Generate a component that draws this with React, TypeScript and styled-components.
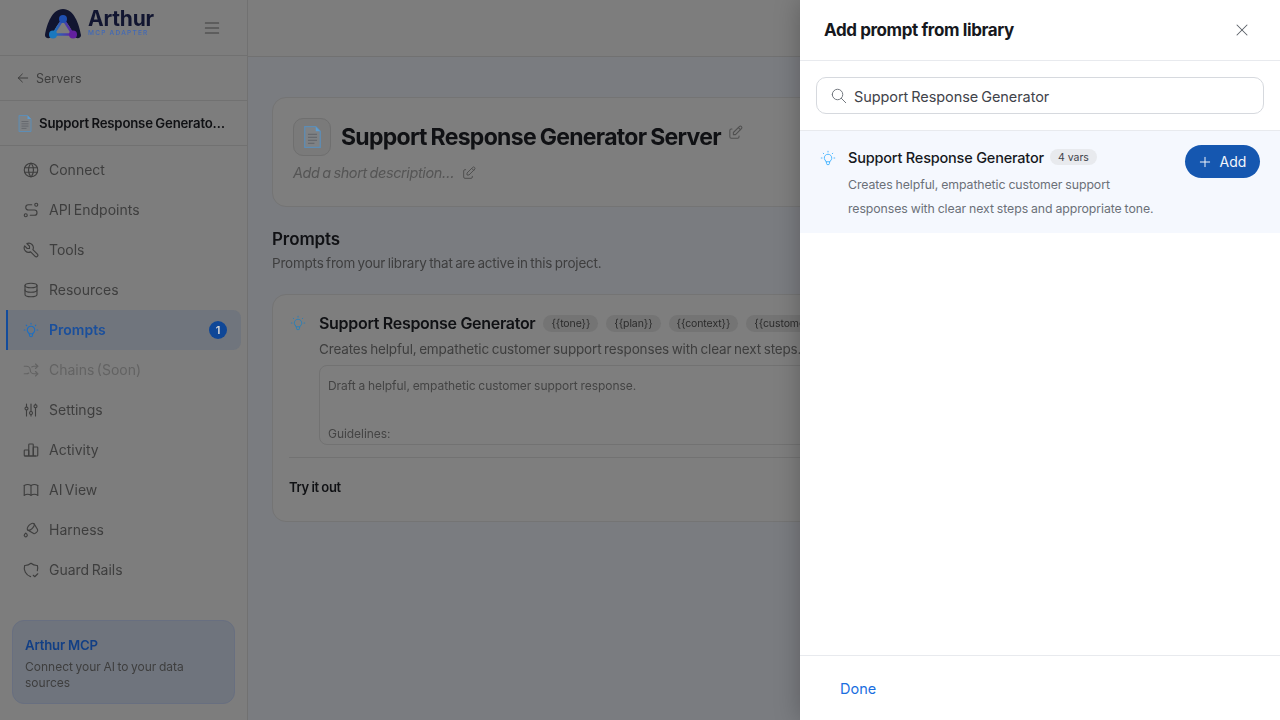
import React from "react";
import styled, { createGlobalStyle } from "styled-components";
import { IconType } from "react-icons";
import {
  TbArrowLeft, TbMenu2, TbWorld, TbRoute, TbTool, TbDatabase, TbBulb, TbArrowsShuffle, TbAdjustments,
  TbChartBar, TbBook, TbBucketDroplet, TbShieldCheck, TbEdit, TbX, TbSearch, TbPlus,
} from "react-icons/tb";

const FONT = `Inter, "Noto Sans", "Liberation Sans", sans-serif`;

const Global = createGlobalStyle`
  html, body { margin: 0; padding: 0; width: 1280px; height: 720px; overflow: hidden; background: #fff; }
  * { box-sizing: border-box; }
  body { font-family: ${FONT}; color: #16181d; }
`;

const Page = styled.div`
  position: relative;
  width: 1280px;
  height: 720px;
  overflow: hidden;
`;

const Shell = styled.div`
  display: flex;
  width: 1280px;
  height: 720px;
  filter: blur(0.45px);
`;

const Sidebar = styled.aside`
  width: 248px;
  flex: none;
  display: flex;
  flex-direction: column;
  background: #7d7d7d;
  border-right: 1px solid #717171;
`;

const Brand = styled.div`
  height: 56px;
  flex: none;
  display: flex;
  align-items: center;
  border-bottom: 1px solid #717171;
  padding: 0 25px 0 44px;
  justify-content: space-between;
`;

const LogoGroup = styled.div`
  display: flex;
  align-items: center;
  gap: 6px;
  margin-bottom: 8px;
`;

const LogoText = styled.div`
  display: flex;
  flex-direction: column;
  margin-top: -3px;
`;

const LogoName = styled.span`
  font-size: 21px;
  font-weight: 700;
  color: #111530;
  letter-spacing: -0.2px;
  line-height: 22px;
`;

const LogoSub = styled.span`
  font-size: 6.5px;
  font-weight: 500;
  color: #3f68b8;
  letter-spacing: 1.25px;
  line-height: 7px;
`;

const BackRow = styled.div`
  height: 45px;
  flex: none;
  display: flex;
  align-items: center;
  gap: 5px;
  padding-left: 15px;
  font-size: 12.5px;
  color: #3e3e3e;
  border-bottom: 1px solid #717171;
`;

const ServerRow = styled.div`
  height: 45px;
  flex: none;
  display: flex;
  align-items: center;
  gap: 7px;
  padding-left: 18px;
  font-size: 13.2px;
  font-weight: 600;
  letter-spacing: -0.2px;
  word-spacing: -0.5px;
  color: #101114;
  border-bottom: 1px solid #717171;
`;

const Nav = styled.nav`
  display: flex;
  flex-direction: column;
  padding: 4px 6px 0;
`;

const NavItem = styled.div<{ $active?: boolean; $disabled?: boolean }>`
  height: 40px;
  display: flex;
  align-items: center;
  gap: 9px;
  padding: 0 14px 0 14px;
  width: 235px;
  font-size: 14px;
  word-spacing: -1.5px;
  font-weight: ${(p) => (p.$active ? 600 : 400)};
  color: ${(p) => (p.$active ? "#1a4f9c" : p.$disabled ? "#636363" : "#3e3e3e")};
  background: ${(p) => (p.$active ? "#70757d" : "transparent")};
  border-left: 2px solid ${(p) => (p.$active ? "#124c9c" : "transparent")};
  border-radius: ${(p) => (p.$active ? "0 8px 8px 0" : "0")};
`;

const NavLabel = styled.span`
  flex: 1;
  margin-bottom: 2px;
`;

const Count = styled.span`
  width: 18px;
  height: 18px;
  border-radius: 50%;
  background: #0f4797;
  color: #d8d8d8;
  font-size: 11px;
  font-weight: 600;
  display: flex;
  align-items: center;
  justify-content: center;
`;

const Promo = styled.div`
  margin: auto 12px 16px;
  height: 84px;
  padding: 15px 12px;
  border-radius: 12px;
  background: #6f747d;
  border: 1px solid #686f80;
`;

const PromoTitle = styled.div`
  font-size: 13.2px;
  font-weight: 600;
  line-height: 18px;
  color: #123f85;
  letter-spacing: -0.2px;
`;

const PromoText = styled.div`
  margin-top: 5px;
  font-size: 12px;
  line-height: 16px;
  word-spacing: -0.8px;
  color: #3e3e3e;
`;

const Main = styled.main`
  flex: 1;
  min-width: 0;
  background: #7a7c80;
  display: flex;
  flex-direction: column;
`;

const TopBar = styled.div`
  height: 57px;
  flex: none;
  background: #7d7d7d;
  border-bottom: 1px solid #717171;
`;

const Content = styled.div`
  padding: 40px 24px;
  display: flex;
  flex-direction: column;
`;

const HeadCard = styled.section`
  height: 110px;
  background: #7e7e7e;
  border: 1px solid #747474;
  border-radius: 14px;
  padding: 20px;
`;

const TitleRow = styled.div`
  display: flex;
  align-items: center;
  gap: 10px;
`;

const EmojiBox = styled.div`
  width: 38px;
  height: 38px;
  border: 1px solid #6f6f6f;
  border-radius: 10px;
  background: #7a7a7a;
  display: flex;
  align-items: center;
  justify-content: center;
`;

const BigTitle = styled.h1`
  margin: 0 -4px 0 0;
  font-size: 23px;
  font-weight: 700;
  letter-spacing: -0.7px;
  word-spacing: -1px;
  color: #101114;
`;

const RaisedIcon = styled.span`
  display: inline-flex;
  margin-bottom: 9px;
  color: #505050;
`;

const DescRow = styled.div`
  margin-top: 8px;
  display: flex;
  align-items: center;
  gap: 7px;
  font-size: 14.5px;
  font-style: italic;
  letter-spacing: -0.4px;
  word-spacing: -1px;
  color: #555;
`;

const SectionTitle = styled.h2`
  margin: 21px 0 0;
  font-size: 17px;
  font-weight: 600;
  letter-spacing: -0.1px;
  line-height: 22px;
  color: #101114;
`;

const SectionSub = styled.p`
  margin: 3px 0 0;
  font-size: 13.5px;
  line-height: 20px;
  letter-spacing: -0.22px;
  word-spacing: -1px;
  color: #3e3e3e;
`;

const PromptCard = styled.section`
  margin-top: 21px;
  height: 228px;
  background: #7e7e7e;
  border: 1px solid #747474;
  border-radius: 14px;
  padding: 15px 16px;
  overflow: hidden;
`;

const PromptBody = styled.div`
  display: flex;
  gap: 12px;
`;

const BulbSlot = styled.span`
  flex: none;
  display: inline-flex;
  height: 18px;
  margin-top: 4px;
  color: #2a7fb8;
`;

const PromptMain = styled.div`
  flex: 1;
  min-width: 0;
`;

const PromptHead = styled.div`
  display: flex;
  align-items: center;
  gap: 8px;
  height: 26px;
  white-space: nowrap;
`;

const PromptName = styled.span`
  font-size: 16px;
  font-weight: 600;
  letter-spacing: -0.3px;
  color: #101114;
`;

const VarChip = styled.span`
  height: 17px;
  padding: 0 8px;
  display: inline-flex;
  align-items: center;
  border-radius: 9px;
  background: #747474;
  font-size: 10.5px;
  letter-spacing: -0.1px;
  color: #2b2b2b;
`;

const PromptDesc = styled.div`
  margin-top: 3px;
  font-size: 13.5px;
  line-height: 20px;
  letter-spacing: -0.15px;
  word-spacing: -1px;
  color: #3e3e3e;
  white-space: nowrap;
`;

const Preview = styled.pre`
  margin: 6px 0 0;
  height: 80px;
  padding: 8px;
  overflow: hidden;
  font-family: ${FONT};
  font-size: 12px;
  line-height: 24px;
  letter-spacing: -0.05px;
  word-spacing: -0.5px;
  color: #444;
  border: 1px solid #727272;
  border-radius: 8px;
`;

const Divider = styled.div`
  margin-top: 12px;
  border-top: 1px solid #727272;
`;

const TryIt = styled.div`
  margin-top: 21px;
  font-size: 13px;
  font-weight: 600;
  letter-spacing: -0.3px;
  word-spacing: -0.5px;
  color: #101114;
`;

const Drawer = styled.aside`
  position: absolute;
  top: 0;
  right: 0;
  bottom: 0;
  width: 480px;
  background: #fff;
  display: flex;
  flex-direction: column;
  box-shadow: 0 0 24px rgba(0, 0, 0, 0.25);
`;

const DrawerHead = styled.header`
  height: 61px;
  flex: none;
  display: flex;
  align-items: center;
  justify-content: space-between;
  padding: 0 28px 0 24px;
  border-bottom: 1px solid #e8eaee;
  color: #5b6068;
`;

const DrawerTitle = styled.h3`
  margin: 0;
  font-size: 17px;
  font-weight: 700;
  color: #16181d;
  letter-spacing: -0.4px;
`;

const SearchZone = styled.div`
  height: 70px;
  flex: none;
  padding: 16px;
  border-bottom: 1px solid #e8eaee;
`;

const SearchBox = styled.div`
  height: 37px;
  display: flex;
  align-items: center;
  gap: 6px;
  padding: 1px 13px 0;
  border: 1px solid #d6d9de;
  border-radius: 10px;
  font-size: 14.5px;
  letter-spacing: -0.07px;
  word-spacing: -1px;
  color: #3f434a;
`;

const Result = styled.div`
  height: 102px;
  flex: none;
  background: #f5f8fe;
  padding: 14px 20px 0 19px;
  display: flex;
  align-items: flex-start;
  gap: 11px;
`;

const ResultBulb = styled.span`
  flex: none;
  display: inline-flex;
  height: 18px;
  margin-top: 4px;
  color: #45b4ff;
`;

const ResultMain = styled.div`
  flex: 1;
  min-width: 0;
`;

const ResultHead = styled.div`
  display: flex;
  align-items: center;
  gap: 6px;
  height: 24px;
`;

const ResultName = styled.span`
  font-size: 14.5px;
  font-weight: 500;
  letter-spacing: -0.2px;
  color: #16181d;
`;

const VarsBadge = styled.span`
  height: 16px;
  padding: 0 8px;
  display: inline-flex;
  align-items: center;
  border-radius: 8px;
  background: #e8eaee;
  font-size: 10.5px;
  color: #3f434a;
`;

const ResultDesc = styled.p`
  margin: 4px 0 0;
  width: 320px;
  font-size: 12.3px;
  line-height: 24px;
  letter-spacing: -0.08px;
  word-spacing: -0.4px;
  color: #6b7078;
`;

const AddButton = styled.button`
  height: 33px;
  width: 75px;
  flex: none;
  border: 0;
  padding: 0 2px 0 0;
  border-radius: 17px;
  background: #1557b0;
  color: #f2f5fb;
  display: flex;
  align-items: center;
  justify-content: center;
  gap: 7px;
  font-family: ${FONT};
  font-size: 14px;
  font-weight: 400;
`;

const DrawerFoot = styled.footer`
  margin-top: auto;
  height: 65px;
  flex: none;
  display: flex;
  align-items: center;
  padding-left: 40px;
  border-top: 1px solid #e8eaee;
  font-size: 14.5px;
  font-weight: 400;
  color: #1a6ee0;
`;

const navItems: { label: string; icon: IconType; active?: boolean; disabled?: boolean; count?: number }[] = [
  { label: "Connect", icon: TbWorld },
  { label: "API Endpoints", icon: TbRoute },
  { label: "Tools", icon: TbTool },
  { label: "Resources", icon: TbDatabase },
  { label: "Prompts", icon: TbBulb, active: true, count: 1 },
  { label: "Chains (Soon)", icon: TbArrowsShuffle, disabled: true },
  { label: "Settings", icon: TbAdjustments },
  { label: "Activity", icon: TbChartBar },
  { label: "AI View", icon: TbBook },
  { label: "Harness", icon: TbBucketDroplet },
  { label: "Guard Rails", icon: TbShieldCheck },
];

const ArthurMark = () => (
  <svg width="38" height="32" viewBox="0 0 38 32" aria-hidden="true">
    <defs>
      <linearGradient id="tri" x1="0" y1="0" x2="1" y2="0">
        <stop offset="0" stopColor="#1a78bd" />
        <stop offset="1" stopColor="#62209f" />
      </linearGradient>
    </defs>
    <path
      d="M1 27C3 16 8 1 19 1s16 15 18 26c.4 3-3.500 4-5.500 2.500C28 26 26 15 19 12 12 15 10 26 6.500 29.500 4.500 31 .6 30 1 27z"
      fill="#111530"
    />
    <path d="M19 11 9 26.500h20z" fill="none" stroke="url(#tri)" strokeWidth="2.500" strokeLinejoin="round" />
    <circle cx="19" cy="11" r="4" fill="#1f4fb0" />
    <circle cx="9" cy="26.500" r="4" fill="#1a78bd" />
    <circle cx="29" cy="26.500" r="4" fill="#62209f" />
  </svg>
);

const DocIcon = ({ width, height }: { width: number; height: number }) => (
  <svg width={width} height={height} viewBox="0 0 14 17" aria-hidden="true">
    <path d="M1 .5h8.500L13 4v12.500H1z" fill="#7f8285" stroke="#5d8db5" strokeWidth="1" />
    <path d="M9.500 .5V4H13z" fill="#5d9cd0" />
    <path d="M3.500 6.500h7M3.500 8.800h7M3.500 11.100h7M3.500 13.400h5" stroke="#66696e" strokeWidth="1" />
  </svg>
);

export default function App() {
  return (
    <>
      <Global />
      <Page>
        <Shell>
          <Sidebar>
            <Brand>
              <LogoGroup>
                <ArthurMark />
                <LogoText>
                  <LogoName>Arthur</LogoName>
                  <LogoSub>MCP ADAPTER</LogoSub>
                </LogoText>
              </LogoGroup>
              <TbMenu2 size={20} color="#3e3e3e" strokeWidth={1.25} />
            </Brand>
            <BackRow>
              <TbArrowLeft size={16} strokeWidth={1.5} />
              Servers
            </BackRow>
            <ServerRow>
              <DocIcon width={14} height={17} />
              Support Response Generato…
            </ServerRow>
            <Nav>
              {navItems.map((n) => (
                <NavItem key={n.label} $active={n.active} $disabled={n.disabled}>
                  <n.icon size={18} strokeWidth={1.5} color={n.active ? "#1f6fc0" : undefined} />
                  <NavLabel>{n.label}</NavLabel>
                  {n.count ? <Count>{n.count}</Count> : null}
                </NavItem>
              ))}
            </Nav>
            <Promo>
              <PromoTitle>Arthur MCP</PromoTitle>
              <PromoText>Connect your AI to your data sources</PromoText>
            </Promo>
          </Sidebar>
          <Main>
            <TopBar />
            <Content>
              <HeadCard>
                <TitleRow>
                  <EmojiBox>
                    <DocIcon width={19} height={22} />
                  </EmojiBox>
                  <BigTitle>Support Response Generator Server</BigTitle>
                  <RaisedIcon>
                    <TbEdit size={17} strokeWidth={1.5} />
                  </RaisedIcon>
                </TitleRow>
                <DescRow>
                  Add a short description…
                  <TbEdit size={16} color="#505050" strokeWidth={1.5} />
                </DescRow>
              </HeadCard>
              <SectionTitle>Prompts</SectionTitle>
              <SectionSub>Prompts from your library that are active in this project.</SectionSub>
              <PromptCard>
                <PromptBody>
                  <BulbSlot>
                    <TbBulb size={18} strokeWidth={1.25} />
                  </BulbSlot>
                  <PromptMain>
                    <PromptHead>
                      <PromptName>Support Response Generator</PromptName>
                      <VarChip>{"{{tone}}"}</VarChip>
                      <VarChip>{"{{plan}}"}</VarChip>
                      <VarChip>{"{{context}}"}</VarChip>
                      <VarChip>{"{{customer_message}}"}</VarChip>
                    </PromptHead>
                    <PromptDesc>Creates helpful, empathetic customer support responses with clear next steps.</PromptDesc>
                    <Preview>{"Draft a helpful, empathetic customer support response.\n\nGuidelines:"}</Preview>
                  </PromptMain>
                </PromptBody>
                <Divider />
                <TryIt>Try it out</TryIt>
              </PromptCard>
            </Content>
          </Main>
        </Shell>
        <Drawer>
          <DrawerHead>
            <DrawerTitle>Add prompt from library</DrawerTitle>
            <TbX size={20} strokeWidth={1.25} />
          </DrawerHead>
          <SearchZone>
            <SearchBox>
              <TbSearch size={18} color="#6b7078" strokeWidth={1.25} />
              Support Response Generator
            </SearchBox>
          </SearchZone>
          <Result>
            <ResultBulb>
              <TbBulb size={18} strokeWidth={1.25} />
            </ResultBulb>
            <ResultMain>
              <ResultHead>
                <ResultName>Support Response Generator</ResultName>
                <VarsBadge>4 vars</VarsBadge>
              </ResultHead>
              <ResultDesc>
                Creates helpful, empathetic customer support responses with clear next steps and appropriate tone.
              </ResultDesc>
            </ResultMain>
            <AddButton>
              <TbPlus size={16} strokeWidth={1.5} />
              Add
            </AddButton>
          </Result>
          <DrawerFoot>Done</DrawerFoot>
        </Drawer>
      </Page>
    </>
  );
}
